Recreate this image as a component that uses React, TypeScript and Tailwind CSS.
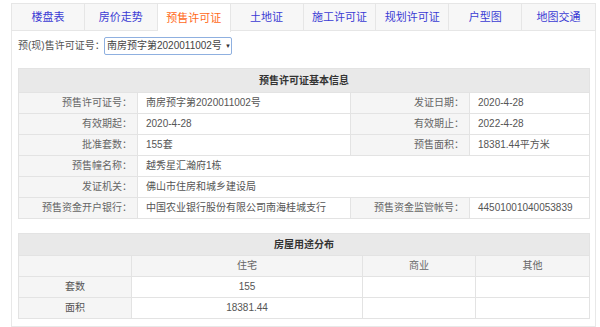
import React from "react";

const tabs = ["楼盘表", "房价走势", "预售许可证", "土地证", "施工许可证", "规划许可证", "户型图", "地图交通"];

const rows: [string, string, string?, string?][] = [
  ["预售许可证号：", "南房预字第2020011002号", "发证日期：", "2020-4-28"],
  ["有效期起：", "2020-4-28", "有效期止：", "2022-4-28"],
  ["批准套数：", "155套", "预售面积：", "18381.44平方米"],
  ["预售幢名称：", "越秀星汇瀚府1栋"],
  ["发证机关：", "佛山市住房和城乡建设局"],
  ["预售资金开户银行：", "中国农业银行股份有限公司南海桂城支行", "预售资金监管帐号：", "44501001040053839"],
];

const cell = "border border-[#e3e3e3] h-[21px] p-0 whitespace-nowrap overflow-hidden";
const label = `${cell} bg-[#f5f5f5] text-right pr-[5px] text-[#666]`;
const value = `${cell} bg-white pl-[8px] text-[#555]`;

export default function App() {
  return (
    <div
      className="w-[600px] h-[327px] bg-white pt-[3px] pl-[11px] text-[10px] leading-none"
      style={{ fontFamily: '"Liberation Sans", "Noto Sans CJK SC", sans-serif' }}
    >
      <div className="w-[585px]">
        <div className="flex h-[28px] bg-[#f7f7f7] border border-[#e6e6e6]">
          {tabs.map((t, i) => (
            <div
              key={t}
              className={
                "w-[73px] flex items-center justify-center text-[11px] border-r border-[#e6e6e6] last:border-r-0 " +
                (i === 2 ? "bg-white text-[#ff6a1a] h-[28px]" : "text-[#3b3bd4]")
              }
            >
              {t}
            </div>
          ))}
        </div>
        <div className="border-x border-b border-[#e8e8e8] pl-[6px] pt-[6px] pb-[7px]">
          <div className="flex items-center h-[18px]">
            <span className="text-[#555] w-[86px] whitespace-nowrap">预(现)售许可证号：</span>
            <div className="w-[128px] h-[18px] border border-[#8fb0e0] rounded-[2px] flex items-center pl-[2px] text-[#444] whitespace-nowrap">
              <span>南房预字第2020011002号</span>
              <span className="ml-[3px] text-[6px] text-[#333]">▼</span>
            </div>
          </div>

          <table className="mt-[13px] w-[571px] border-collapse table-fixed">
            <colgroup>
              <col className="w-[119px]" />
              <col className="w-[213px]" />
              <col className="w-[119px]" />
              <col className="w-[120px]" />
            </colgroup>
            <tbody>
              <tr>
                <td colSpan={4} className="border border-[#e3e3e3] bg-[#e9e9e9] h-[24px] p-0 text-center font-bold text-[#333]">
                  预售许可证基本信息
                </td>
              </tr>
              {rows.map((r) => (
                <tr key={r[0]}>
                  <td className={label}>{r[0]}</td>
                  {r[2] ? (
                    <>
                      <td className={value}>{r[1]}</td>
                      <td className={label}>{r[2]}</td>
                      <td className={value}>{r[3]}</td>
                    </>
                  ) : (
                    <td colSpan={3} className={value}>{r[1]}</td>
                  )}
                </tr>
              ))}
            </tbody>
          </table>

          <table className="mt-[14px] w-[571px] border-collapse table-fixed text-center">
            <colgroup>
              <col className="w-[113px]" />
              <col className="w-[231px]" />
              <col className="w-[113px]" />
              <col className="w-[114px]" />
            </colgroup>
            <tbody>
              <tr>
                <td colSpan={4} className="border border-[#e3e3e3] bg-[#e9e9e9] h-[22px] p-0 font-bold text-[#333]">
                  房屋用途分布
                </td>
              </tr>
              <tr className="bg-[#f5f5f5] text-[#666]">
                <td className={cell}></td>
                <td className={cell}>住宅</td>
                <td className={cell}>商业</td>
                <td className={cell}>其他</td>
              </tr>
              <tr className="text-[#555]">
                <td className={`${cell} bg-[#f5f5f5]`}>套数</td>
                <td className={cell}>155</td>
                <td className={cell}></td>
                <td className={cell}></td>
              </tr>
              <tr className="text-[#555]">
                <td className={`${cell} bg-[#f5f5f5]`}>面积</td>
                <td className={cell}>18381.44</td>
                <td className={cell}></td>
                <td className={cell}></td>
              </tr>
            </tbody>
          </table>
        </div>
      </div>
    </div>
  );
}
